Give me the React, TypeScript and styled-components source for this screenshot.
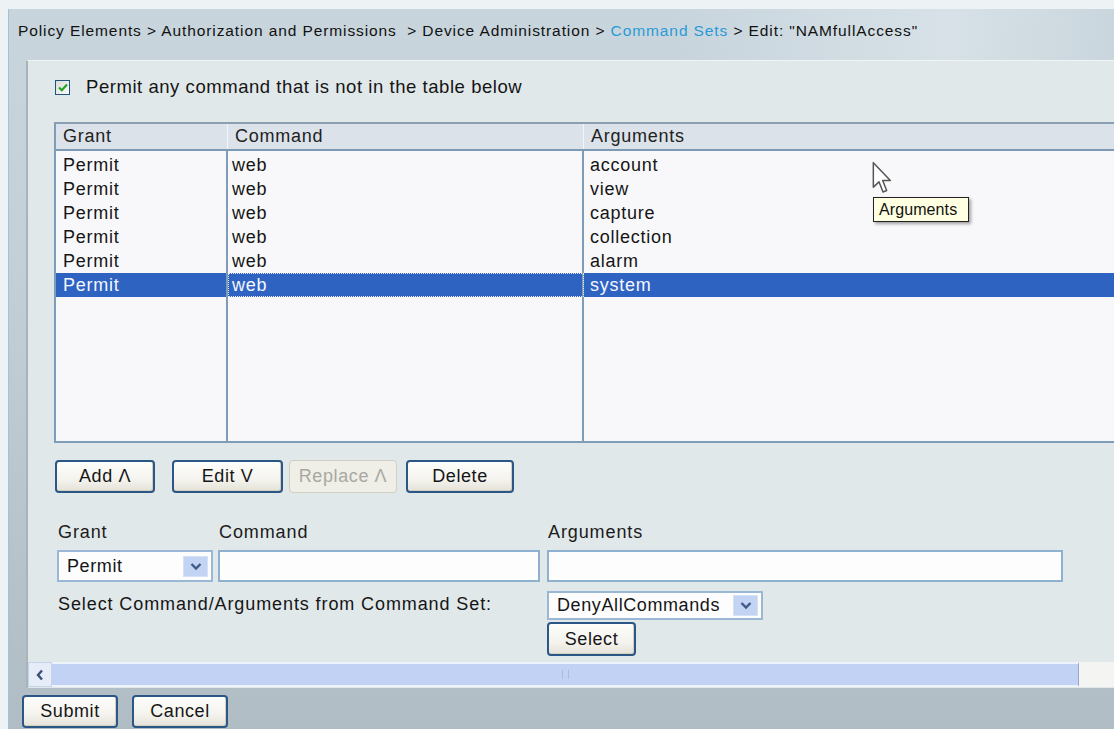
import React from 'react';
import styled, { createGlobalStyle } from 'styled-components';

const FONT = `'Liberation Sans', Arial, sans-serif`;
const GRID_LINE = '#7f9db9';
const BUTTON_EDGE = '#2a5785';
const SELECTED = '#2f63c2';

const GlobalStyle = createGlobalStyle`
  html, body {
    margin: 0;
    padding: 0;
    overflow: hidden;
  }
  body {
    font-family: ${FONT};
    background: #eef3f6;
    color: #151515;
  }
`;

const Screen = styled.div`
  position: relative;
  width: 1114px;
  height: 729px;
  overflow: hidden;
  box-sizing: border-box;
  padding: 9px 0 0 8px;
  background: #edf2f5;
  letter-spacing: 0.6px;
`;

const Shell = styled.div`
  height: 100%;
  display: flex;
  flex-direction: column;
  border-left: 1px solid #a3c2da;
  background: linear-gradient(180deg, #c8d5dd 0%, #c4d0d8 35%, #b6c2c9 80%, #b1bdc4 100%);
`;

const Breadcrumb = styled.div`
  height: 51px;
  flex: 0 0 51px;
  display: flex;
  align-items: center;
  padding-left: 9px;
  padding-bottom: 8px;
  box-sizing: border-box;
  font-size: 15.5px;
  letter-spacing: 0.9px;
  color: #111;
  white-space: pre;
  background: linear-gradient(90deg, rgba(255, 255, 255, 0) 60%, rgba(225, 233, 238, 0.6) 85%, rgba(205, 216, 222, 0.4) 100%);
`;

const Crumb = styled.span<{ $link?: boolean }>`
  color: ${({ $link }) => ($link ? '#2b9ad6' : '#111')};
`;

const Panel = styled.div`
  flex: 0 0 628px;
  height: 628px;
  margin-left: 17px;
  display: flex;
  flex-direction: column;
  box-sizing: border-box;
  border-left: 2px solid #a7b4ba;
  border-top: 1px solid #eef3f4;
  background: #e1e8ea;
`;

const PanelBody = styled.div`
  flex: 1;
  padding-left: 26px;
  display: flex;
  flex-direction: column;
`;

const CheckRow = styled.label`
  display: flex;
  align-items: center;
  height: 18px;
  margin-top: 17px;
  font-size: 18.5px;
  letter-spacing: 0.55px;
`;

const CheckBox = styled.span`
  width: 13px;
  height: 13px;
  margin-left: 1px;
  margin-right: 16px;
  border: 1px solid #1d5281;
  background: linear-gradient(135deg, #dcdcd6, #fbfbf9);
  display: flex;
  align-items: center;
  justify-content: center;
`;

const ListTable = styled.div`
  margin-top: 26px;
  width: 1100px;
  height: 321px;
  display: flex;
  flex-direction: column;
  box-sizing: border-box;
  border: 2px solid ${GRID_LINE};
  border-top-color: #8aa0b2;
  font-size: 18px;
  letter-spacing: 0.75px;
`;

const HeaderRow = styled.div`
  display: grid;
  grid-template-columns: 172px 356px 1fr;
  height: 25px;
  background: #dbe2e9;
  border-bottom: 2px solid #7d99b3;
`;

const HeaderCell = styled.div`
  display: flex;
  align-items: center;
  padding-left: 7px;
  border-right: 1px solid #f2f5f8;
  color: #222;
  &:last-child {
    border-right: none;
  }
`;

const Body = styled.div`
  flex: 1;
  display: grid;
  grid-template-columns: 172px 356px 1fr;
  grid-template-rows: 2px repeat(6, 24px) 1fr;
  background: #f8f8fa;
`;

const Cell = styled.div<{ $selected?: boolean; $focus?: boolean; $pad?: number }>`
  display: flex;
  align-items: center;
  padding-left: ${({ $pad }) => $pad ?? 6}px;
  box-sizing: border-box;
  border-right: 2px solid ${GRID_LINE};
  background: ${({ $selected }) => ($selected ? SELECTED : 'transparent')};
  color: ${({ $selected }) => ($selected ? '#f4f7ff' : '#151515')};
  outline: ${({ $focus }) => ($focus ? '1px dotted #e4ebfa' : 'none')};
  outline-offset: -1px;
  white-space: nowrap;
  &:nth-child(3n) {
    border-right: none;
  }
`;

const ButtonRow = styled.div`
  display: flex;
  align-items: center;
  margin-top: 17px;
  margin-left: 1px;
`;

const Button = styled.button<{ $width: number; $gap?: number; $height?: number }>`
  width: ${({ $width }) => $width}px;
  height: ${({ $height }) => $height ?? 33}px;
  margin-right: ${({ $gap }) => $gap ?? 0}px;
  padding: 0;
  font-family: ${FONT};
  font-size: 18px;
  letter-spacing: 0.6px;
  color: #161616;
  border: 2px solid ${BUTTON_EDGE};
  border-radius: 4px;
  background: linear-gradient(180deg, #fdfdfb 0%, #f4f3ee 60%, #e4e2d8 100%);
  box-shadow: inset -1px -1px 0 #d3d0c3;

  &:disabled {
    color: #a9a8a2;
    border: 1px solid #d1cfc3;
    background: #efeee7;
    box-shadow: none;
  }
`;

const FormGrid = styled.div`
  display: grid;
  grid-template-columns: 161px 329px 516px;
  margin-top: 28px;
  margin-left: 3px;
  font-size: 18px;
  letter-spacing: 0.9px;
`;

const FieldLabel = styled.div`
  height: 22px;
  line-height: 22px;
  padding-left: 1px;
  color: #1b1b1b;
`;

const TextInput = styled.div<{ $width: number }>`
  width: ${({ $width }) => $width}px;
  height: 32px;
  margin-top: 7px;
  box-sizing: border-box;
  border: 2px solid #8fb0cf;
  background: #fdfdfe;
`;

const SelectBox = styled.div<{ $height: number; $width: number }>`
  height: ${({ $height }) => $height}px;
  width: ${({ $width }) => $width}px;
  box-sizing: border-box;
  display: flex;
  align-items: center;
  justify-content: space-between;
  padding: 0 3px 0 8px;
  border: 2px solid #9ab8d6;
  background: #fdfdfe;
  color: #151515;
  letter-spacing: 0.6px;
`;

const SelectArrow = styled.span`
  width: 25px;
  height: 21px;
  display: flex;
  align-items: center;
  justify-content: center;
  background: #c3d3f3;
  border: 1px solid #d6e1f6;
  box-sizing: border-box;
`;

const PermitSelect = styled(SelectBox)`
  margin-top: 7px;
`;

const CommandSetRow = styled.div`
  grid-column: 1 / span 2;
  margin-top: 9px;
  height: 29px;
  line-height: 26px;
  padding-left: 1px;
`;

const CommandSetCell = styled.div`
  margin-top: 9px;
  display: flex;
  flex-direction: column;
  align-items: flex-start;
  gap: 2px;
`;

const ScrollBar = styled.div`
  display: flex;
  height: 25px;
  margin-bottom: 1px;
`;

const ScrollArrow = styled.div`
  width: 22px;
  display: flex;
  align-items: center;
  justify-content: center;
  background: #e7edf8;
  border: 1px solid #c4d2ea;
`;

const ScrollTrack = styled.div`
  width: 1027px;
  display: flex;
  align-items: center;
  justify-content: center;
  background: #c2d2f4;
  border-top: 2px solid #eef2fb;
  border-bottom: 2px solid #eef2fb;
  border-right: 1px solid #9aa8c4;
  box-sizing: border-box;
`;

const Grip = styled.span`
  width: 5px;
  height: 9px;
  border-left: 1px solid #a9bce4;
  border-right: 1px solid #a9bce4;
`;

const ScrollRest = styled.div`
  flex: 1;
  background: #f4f4f2;
`;

const Footer = styled.div`
  display: flex;
  margin-top: 7px;
  margin-left: 13px;
`;

const Tooltip = styled.div`
  position: absolute;
  left: 873px;
  top: 197px;
  width: 96px;
  height: 25px;
  box-sizing: border-box;
  padding-left: 5px;
  display: flex;
  align-items: center;
  font-size: 16px;
  letter-spacing: 0.1px;
  color: #111;
  background: #ffffe1;
  border: 1px solid #222;
  box-shadow: 2px 2px 3px rgba(0, 0, 0, 0.35);
`;

const Pointer = styled.svg`
  position: absolute;
  left: 872px;
  top: 161px;
`;

const Chevron: React.FC<{ dir?: 'down' | 'left' }> = ({ dir = 'down' }) =>
  dir === 'down' ? (
    <svg width="12" height="9" viewBox="0 0 12 9">
      <path d="M1.5 2 L6 6.5 L10.5 2" fill="none" stroke="#405a86" strokeWidth="2.4" />
    </svg>
  ) : (
    <svg width="8" height="12" viewBox="0 0 8 12">
      <path d="M6 1.5 L2 6 L6 10.5" fill="none" stroke="#3b4f7c" strokeWidth="2.4" />
    </svg>
  );

const rows = ['account', 'view', 'capture', 'collection', 'alarm', 'system'];
const selectedRow = 5;

const App: React.FC = () => {
  return (
    <>
      <GlobalStyle />
      <Screen>
        <Shell>
          <Breadcrumb>
            <Crumb>Policy Elements &gt; Authorization and Permissions  &gt; Device Administration &gt; </Crumb>
            <Crumb $link>Command Sets</Crumb>
            <Crumb> &gt; Edit: "NAMfullAccess"</Crumb>
          </Breadcrumb>

          <Panel>
            <PanelBody>
              <CheckRow>
                <CheckBox>
                  <svg width="10" height="9" viewBox="0 0 10 9">
                    <path d="M1 4.5 L3.8 7.2 L9 1.5" fill="none" stroke="#23a226" strokeWidth="2.2" />
                  </svg>
                </CheckBox>
                Permit any command that is not in the table below
              </CheckRow>

              <ListTable>
                <HeaderRow>
                  <HeaderCell>Grant</HeaderCell>
                  <HeaderCell>Command</HeaderCell>
                  <HeaderCell>Arguments</HeaderCell>
                </HeaderRow>
                <Body>
                  <Cell />
                  <Cell />
                  <Cell />
                  {rows.map((arg, i) => (
                    <React.Fragment key={arg}>
                      <Cell $pad={7} $selected={i === selectedRow}>Permit</Cell>
                      <Cell $pad={4} $selected={i === selectedRow} $focus={i === selectedRow}>web</Cell>
                      <Cell $pad={6} $selected={i === selectedRow}>{arg}</Cell>
                    </React.Fragment>
                  ))}
                  <Cell />
                  <Cell />
                  <Cell />
                </Body>
              </ListTable>

              <ButtonRow>
                <Button $width={100} $gap={17}>Add Λ</Button>
                <Button $width={111} $gap={6}>Edit V</Button>
                <Button $width={108} $gap={9} disabled>Replace Λ</Button>
                <Button $width={108}>Delete</Button>
              </ButtonRow>

              <FormGrid>
                <FieldLabel>Grant</FieldLabel>
                <FieldLabel>Command</FieldLabel>
                <FieldLabel>Arguments</FieldLabel>

                <PermitSelect $height={32} $width={156}>
                  Permit
                  <SelectArrow>
                    <Chevron />
                  </SelectArrow>
                </PermitSelect>
                <TextInput $width={322} />
                <TextInput $width={516} />

                <CommandSetRow>Select Command/Arguments from Command Set:</CommandSetRow>
                <CommandSetCell>
                  <SelectBox $height={29} $width={216}>
                    DenyAllCommands
                    <SelectArrow>
                      <Chevron />
                    </SelectArrow>
                  </SelectBox>
                  <Button $width={89} $height={34}>Select</Button>
                </CommandSetCell>
              </FormGrid>
            </PanelBody>

            <ScrollBar>
              <ScrollArrow>
                <Chevron dir="left" />
              </ScrollArrow>
              <ScrollTrack>
                <Grip />
              </ScrollTrack>
              <ScrollRest />
            </ScrollBar>
          </Panel>

          <Footer>
            <Button $width={96} $gap={14}>Submit</Button>
            <Button $width={96}>Cancel</Button>
          </Footer>
        </Shell>

        <Pointer width="20" height="34" viewBox="0 0 12 20">
          <path
            d="M0.8 0.8 L0.8 15.5 L4.2 12.3 L6.6 18.4 L8.8 17.5 L6.4 11.5 L11 11.5 Z"
            fill="#fff"
            stroke="#555"
            strokeWidth="0.9"
            strokeLinejoin="round"
          />
        </Pointer>
        <Tooltip>Arguments</Tooltip>
      </Screen>
    </>
  );
};

export default App;
